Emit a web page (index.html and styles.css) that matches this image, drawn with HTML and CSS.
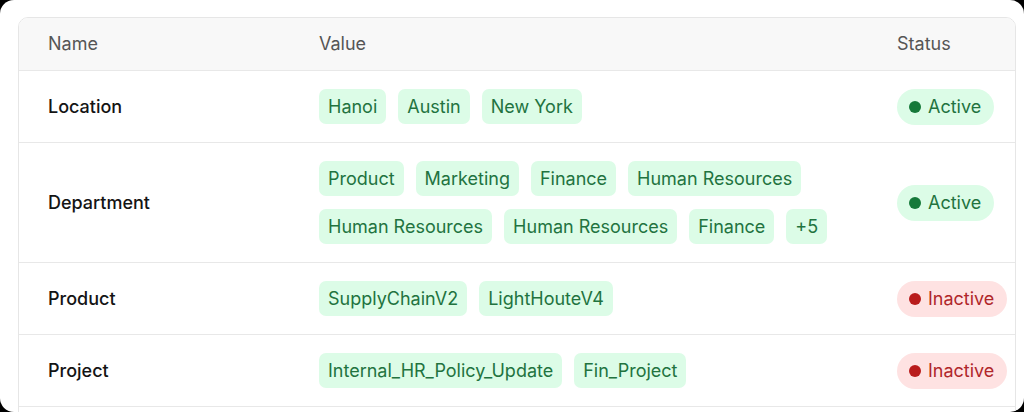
FILE: index.html
```html
<!DOCTYPE html>
<html lang="en">
<head>
<meta charset="utf-8">
<title>Attributes</title>
<link rel="stylesheet" href="styles.css">
</head>
<body>
<div class="frame">
  <div class="card">
    <div class="row head">
      <div class="cell">Name</div>
      <div class="cell">Value</div>
      <div class="cell">Status</div>
    </div>
    <div class="row">
      <div class="cell name">Location</div>
      <div class="cell tags">
        <span class="tag">Hanoi</span><span class="tag">Austin</span><span class="tag">New York</span>
      </div>
      <div class="cell"><span class="pill active"><span class="dot"></span>Active</span></div>
    </div>
    <div class="row">
      <div class="cell name">Department</div>
      <div class="cell tags">
        <span class="tag">Product</span><span class="tag">Marketing</span><span class="tag">Finance</span><span class="tag">Human Resources</span><span class="tag">Human Resources</span><span class="tag">Human Resources</span><span class="tag">Finance</span><span class="tag">+5</span>
      </div>
      <div class="cell"><span class="pill active"><span class="dot"></span>Active</span></div>
    </div>
    <div class="row">
      <div class="cell name">Product</div>
      <div class="cell tags">
        <span class="tag">SupplyChainV2</span><span class="tag">LightHouteV4</span>
      </div>
      <div class="cell"><span class="pill inactive"><span class="dot"></span>Inactive</span></div>
    </div>
    <div class="row">
      <div class="cell name">Project</div>
      <div class="cell tags">
        <span class="tag">Internal_HR_Policy_Update</span><span class="tag">Fin_Project</span>
      </div>
      <div class="cell"><span class="pill inactive"><span class="dot"></span>Inactive</span></div>
    </div>
  </div>
</div>
</body>
</html>
```

FILE: styles.css
```css
* { box-sizing: border-box; }
html, body {
  margin: 0;
  padding: 0;
  background: #000;
}
body {
  font-family: Inter, "Noto Sans", sans-serif;
  font-size: 18px;
  line-height: 24px;
  color: #111;
}
.frame {
  width: 1024px;
  height: 412px;
  background: #fff;
  border-radius: 14px;
  overflow: hidden;
  padding: 17px 8px 0 18px;
}
.card {
  border: 1px solid #e6e6e6;
  border-radius: 10px;
  overflow: hidden;
  padding-bottom: 40px;
}
.row {
  display: grid;
  grid-template-columns: 271px 578px 1fr;
  align-items: center;
  border-bottom: 1px solid #e8e8e8;
}
.row .cell {
  padding: 0 29px;
}
.row .cell.tags {
  padding: 18px 29px;
}
.row.head {
  background: #f8f8f8;
  color: #555;
}
.row.head .cell {
  padding: 14px 29px;
}
.name {
  font-weight: 500;
  color: #141414;
}
.tags {
  display: flex;
  flex-wrap: wrap;
  column-gap: 12px;
  row-gap: 13px;
}
.tag {
  display: inline-block;
  background: #dcfce7;
  color: #22733f;
  border-radius: 7px;
  padding: 5.5px 9px;
  line-height: 24px;
}
.pill {
  display: inline-flex;
  align-items: center;
  gap: 7px;
  height: 36px;
  padding: 0 13px 0 12px;
  border-radius: 18px;
}
.dot {
  width: 12px;
  height: 12px;
  border-radius: 50%;
}
.pill.active {
  background: #dcfce7;
  color: #22733f;
}
.pill.active .dot { background: #16793a; }
.pill.inactive {
  background: #fee2e2;
  color: #b0262a;
}
.pill.inactive .dot { background: #b91c1c; }
```
